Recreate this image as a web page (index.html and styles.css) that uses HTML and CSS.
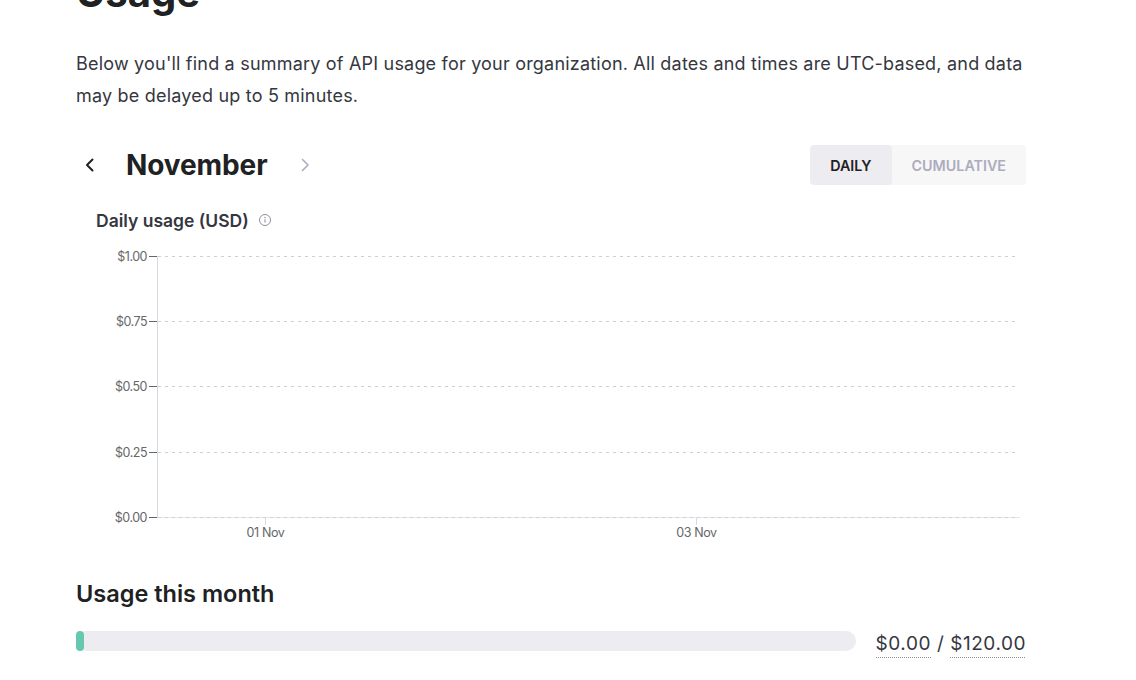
FILE: index.html
```html
<!DOCTYPE html>
<html>
<head>
<meta charset="utf-8">
<link rel="stylesheet" href="styles.css">
</head>
<body>
<main class="page">
  <h1 class="title">Usage</h1>
  <p class="intro">Below you'll find a summary of API usage for your organization. All dates and times are UTC-based, and data may be delayed up to 5 minutes.</p>

  <div class="month-row">
    <div class="month-nav">
      <button class="nav-btn prev" aria-label="Previous month">
        <svg width="16" height="16" viewBox="0 0 16 16"><path d="M10.5 2.5 5 8l5.5 5.5" fill="none" stroke="currentColor" stroke-width="2" stroke-linecap="round" stroke-linejoin="round"/></svg>
      </button>
      <h2 class="month">November</h2>
      <button class="nav-btn next" aria-label="Next month">
        <svg width="16" height="16" viewBox="0 0 16 16"><path d="M5.5 2.5 11 8l-5.5 5.5" fill="none" stroke="currentColor" stroke-width="1.6" stroke-linecap="round" stroke-linejoin="round"/></svg>
      </button>
    </div>
    <div class="toggle">
      <span class="seg active">DAILY</span>
      <span class="seg">CUMULATIVE</span>
    </div>
  </div>

  <div class="chart-title">
    <span>Daily usage (USD)</span>
    <svg class="info" width="14" height="14" viewBox="0 0 14 14"><circle cx="7" cy="7" r="5.5" fill="none" stroke="currentColor" stroke-width="1"/><line x1="7" y1="6.2" x2="7" y2="9.6" stroke="currentColor" stroke-width="1.1"/><circle cx="7" cy="4.4" r="0.75" fill="currentColor"/></svg>
  </div>

  <svg class="chart" width="960" height="300" viewBox="0 0 960 300">
    <g class="grid">
      <line x1="82" y1="11.5" x2="940" y2="11.5"/>
      <line x1="82" y1="76.5" x2="940" y2="76.5"/>
      <line x1="82" y1="141.5" x2="940" y2="141.5"/>
      <line x1="82" y1="207.5" x2="940" y2="207.5"/>
    </g>
    <line class="xaxis" x1="82" y1="272.5" x2="944" y2="272.5"/>
    <line class="grid-base" x1="82" y1="272.5" x2="940" y2="272.5"/>
    <line class="yaxis" x1="81.5" y1="11" x2="81.5" y2="273"/>
    <g class="ticks">
      <line x1="73" y1="11.5" x2="81" y2="11.5"/>
      <line x1="73" y1="76.5" x2="81" y2="76.5"/>
      <line x1="73" y1="141.5" x2="81" y2="141.5"/>
      <line x1="73" y1="207.5" x2="81" y2="207.5"/>
      <line x1="73" y1="272.5" x2="81" y2="272.5"/>
      <line x1="189.5" y1="273" x2="189.5" y2="280"/>
      <line x1="620.5" y1="273" x2="620.5" y2="280"/>
    </g>
    <g class="ylabels">
      <text x="71" y="15.5">$1.00</text>
      <text x="71" y="80.5">$0.75</text>
      <text x="71" y="145.5">$0.50</text>
      <text x="71" y="211.5">$0.25</text>
      <text x="71" y="276.5">$0.00</text>
    </g>
    <g class="xlabels">
      <text x="189.5" y="292">01 Nov</text>
      <text x="620.5" y="292">03 Nov</text>
    </g>
  </svg>

  <h2 class="section-title">Usage this month</h2>
  <div class="usage-row">
    <div class="bar"><div class="fill" style="width: 8px"></div></div>
    <div class="amount"><span class="dotted">$0.00</span> / <span class="dotted">$120.00</span></div>
  </div>
</main>
</body>
</html>
```

FILE: styles.css
```css
* { box-sizing: border-box; }
html, body { margin: 0; padding: 0; background: #fff; }
body {
  font-family: Inter, "Noto Sans", "Liberation Sans", sans-serif;
  color: #353740;
  overflow: hidden;
}
.page {
  width: 950px;
  margin-left: 76px;
  margin-top: -31px;
}
.title {
  margin: 0;
  font-size: 40px;
  line-height: 48px;
  font-weight: 700;
  color: #202123;
}
.intro {
  margin: 31px 0 0;
  font-size: 18px;
  line-height: 32px;
  color: #353740;
  letter-spacing: 0.2px;
}
.month-row {
  margin-top: 33px;
  display: flex;
  align-items: center;
  justify-content: space-between;
  height: 40px;
}
.month-nav {
  display: flex;
  align-items: center;
}
.nav-btn {
  background: none;
  border: 0;
  padding: 0;
  width: 28px;
  height: 28px;
  display: flex;
  align-items: center;
  justify-content: center;
  cursor: pointer;
}
.nav-btn.prev { color: #202123; }
.nav-btn.next { color: #acacbe; margin-left: 24px; }
.month {
  margin: 0 0 0 22px;
  font-size: 28px;
  font-weight: 700;
  color: #202123;
  letter-spacing: -0.1px;
}
.toggle {
  display: flex;
  height: 40px;
  background: #f7f7f8;
  border-radius: 4px;
  overflow: hidden;
}
.seg {
  display: flex;
  align-items: center;
  justify-content: center;
  font-size: 14.3px;
  font-weight: 600;
  color: #acacbe;
  padding: 0 20px;
  letter-spacing: 0;
}
.seg.active {
  background: #ececf1;
  color: #202123;
  border-radius: 4px;
}
.chart-title {
  margin: 23px 0 0 20px;
  display: flex;
  align-items: center;
  gap: 9px;
  font-size: 17.5px;
  font-weight: 600;
  color: #353740;
  height: 24px;
  letter-spacing: 0;
}
.info { color: #8e8ea0; }
.chart {
  display: block;
  margin-top: 13px;
}
.grid line, .grid-base {
  stroke: #cfcfd6;
  stroke-width: 1;
  stroke-dasharray: 3 4;
}
.xaxis { stroke: #e6e6ea; stroke-width: 1; }
.yaxis { stroke: #d9d9e3; stroke-width: 1; }
.ticks line { stroke: #666666; stroke-width: 1; }
.ticks line:nth-child(n+6) { stroke: #d9d9e3; }
.ylabels text {
  font-family: Inter, "Liberation Sans", sans-serif;
  font-size: 12.5px;
  fill: #666666;
  text-anchor: end;
  letter-spacing: -0.5px;
}
.xlabels text {
  font-family: Inter, "Liberation Sans", sans-serif;
  font-size: 12.5px;
  fill: #666666;
  text-anchor: middle;
  letter-spacing: -0.4px;
}
.section-title {
  margin: 35px 0 0;
  font-size: 23.5px;
  line-height: 28px;
  font-weight: 600;
  color: #202123;
  letter-spacing: 0;
}
.usage-row {
  margin-top: 16px;
  display: flex;
  align-items: center;
  gap: 20px;
}
.bar {
  flex: 1;
  height: 20px;
  background: #ececf1;
  border-radius: 10px;
}
.fill {
  height: 100%;
  background: #66c8ae;
  border-radius: 4px;
}
.amount {
  font-size: 19px;
  color: #353740;
  white-space: nowrap;
  padding-top: 8px;
  letter-spacing: 0.55px;
}
.dotted {
  display: inline-block;
  padding-bottom: 3px;
  background-image: linear-gradient(to right, #8e8ea0 50%, transparent 50%);
  background-size: 2px 1px;
  background-repeat: repeat-x;
  background-position: left bottom;
}
```
